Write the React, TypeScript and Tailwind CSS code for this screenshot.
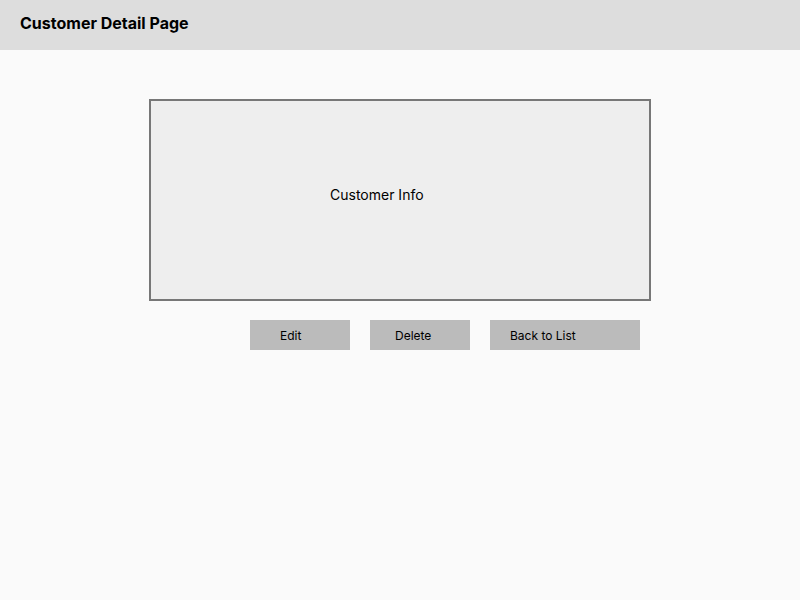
export default function App() {
  return (
    <div className="w-[800px] h-[600px] bg-[#fafafa] text-black" style={{ fontFamily: 'Inter, "Noto Sans", sans-serif' }}>
      <header className="h-[50px] bg-[#dddddd] px-5 pt-[15px]">
        <h1 className="text-[16px] font-bold leading-none">Customer Detail Page</h1>
      </header>

      <main className="pt-[49px] pl-[149px]">
        <div className="w-[502px] h-[202px] border-2 border-[#777777] bg-[#eeeeee] pl-[179px] pt-[85px]">
          <span className="text-[14px] leading-[18px] block">Customer Info</span>
        </div>

        <div className="flex gap-5 mt-[19px] ml-[101px] text-[12px] leading-[30px]">
          <button className="w-[100px] h-[30px] bg-[#bbbbbb] text-left pl-[30px] pt-px">Edit</button>
          <button className="w-[100px] h-[30px] bg-[#bbbbbb] text-left pl-[25px] pt-px">Delete</button>
          <button className="w-[150px] h-[30px] bg-[#bbbbbb] text-left pl-[20px] pt-px">Back to List</button>
        </div>
      </main>
    </div>
  );
}
